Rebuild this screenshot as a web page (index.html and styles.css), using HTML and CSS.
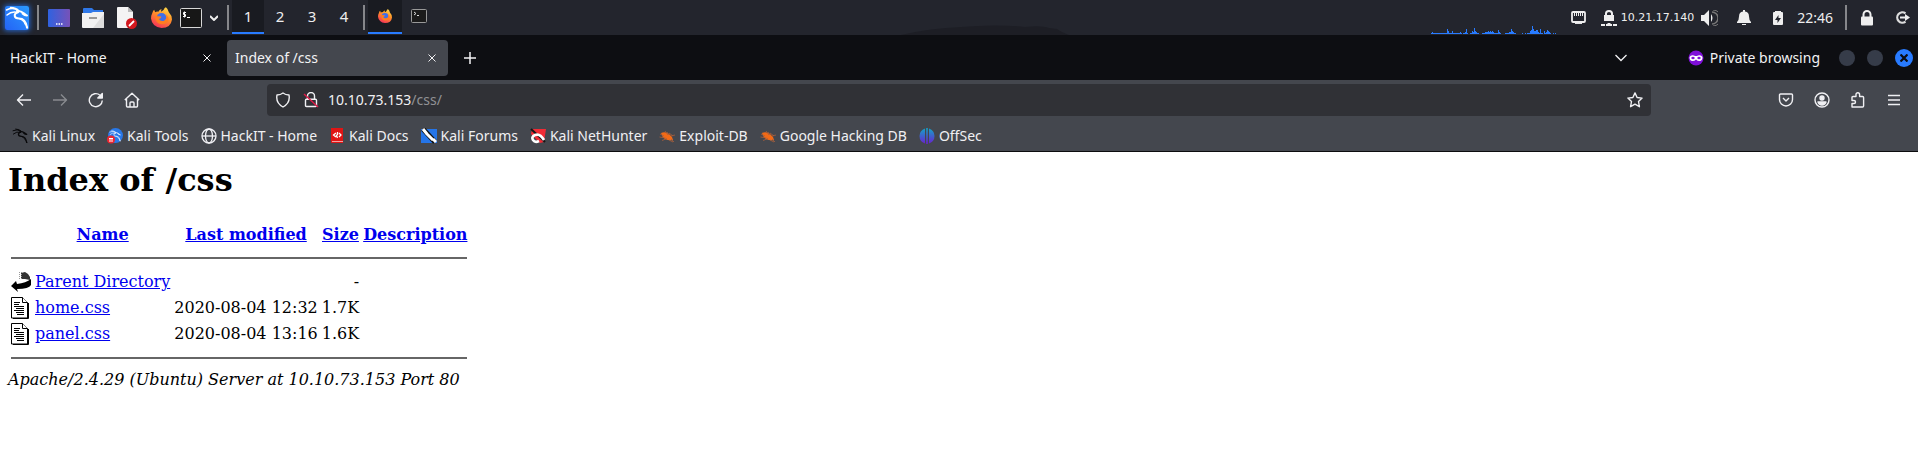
FILE: index.html
```html
<!DOCTYPE html>
<html lang="en">
<head>
<meta charset="utf-8">
<title>Index of /css</title>
<link rel="stylesheet" href="styles.css">
</head>
<body>
<svg class="defs" aria-hidden="true">
  <defs>
    <linearGradient id="kali" x1="0" y1="1" x2="1" y2="0"><stop offset="0" stop-color="#2463f5"/><stop offset="1" stop-color="#2b9bff"/></linearGradient>
    <linearGradient id="desk" x1="0" y1="0" x2="1" y2="0"><stop offset="0" stop-color="#2f62e0"/><stop offset="1" stop-color="#7752b8"/></linearGradient>
    <linearGradient id="fire" x1="0.8" y1="0" x2="0.3" y2="1"><stop offset="0" stop-color="#ffe04a"/><stop offset="0.45" stop-color="#ff9028"/><stop offset="1" stop-color="#f5305a"/></linearGradient>
    <linearGradient id="off" x1="0" y1="0" x2="0" y2="1"><stop offset="0" stop-color="#12a5c8"/><stop offset="1" stop-color="#6a1fd0"/></linearGradient>
    <symbol id="dragon" viewBox="0 0 24 24">
      <path fill="none" stroke="currentColor" stroke-width="1.500" stroke-linecap="round" d="M1.500 4Q8 1 13 4.500M2 9Q7 4.500 13 6.500M5.500 1.500Q11 1.500 14 5"/>
      <path fill="none" stroke="currentColor" stroke-width="2" stroke-linecap="round" stroke-linejoin="round" d="M12 5C17 4.500 18 7 22 9.500M17.500 7.500Q19.500 9.500 22 9.500M13 6C8 8 9 12.500 14 12.500C19 12.500 21 15 22 21.500"/>
      <path fill="none" stroke="currentColor" stroke-width="1.200" stroke-linecap="round" d="M14 12.500Q19 14.500 20 18Q21.500 19 22.500 22"/>
    </symbol>
    <symbol id="firefox" viewBox="0 0 20 20">
      <path fill="url(#fire)" d="M1 6.500Q2 3 3 2.500L4 5Q5.500 4 7 4.500Q8 2.500 10 2L9.500 4.500Q12 4 13 1Q14.500 .5 14 0Q16.500 2 17 5Q20 8 20 12Q19 20 10 20Q1 19 0 11Q0 8 1 6.500Z"/>
      <circle cx="10" cy="10.500" r="4.800" fill="#3f6fe8"/>
      <path fill="#ff7d20" d="M4 8.500L10 9Q9.500 11 7.500 11.500Q9 14 12.500 13Q16 11 14 7Q18 10 16 14Q12 18 7 15.500Q4 13 4 8.500Z"/>
    </symbol>
    <symbol id="close" viewBox="0 0 8 8"><path fill="none" stroke="currentColor" d="M.5 .5l7 7M7.500 .5l-7 7"/></symbol>
    <symbol id="bug" viewBox="0 0 16 16"><path fill="#f36a16" d="M2 5Q6 3 10 6Q13 8 14 12Q10 13 6 11Q3 9 2 5Z"/><path fill="none" stroke="#a8603c" stroke-width=".8" d="M6 3l3 4M1 6l4 2M.5 9l6 1M3 12.500l5-2M10 5l4 3M8 4l2 3M12 8l4-1M10 12l4 2M12 11l3 3"/></symbol>
    <symbol id="page" viewBox="0 0 20 22">
      <path fill="#fff" stroke="#000" d="M.5 .5h11l5 5v15.500h-16z"/><path fill="none" stroke="#000" d="M17.500 6v15.500H2"/><path fill="#fff" stroke="#000" d="M11.500 .5v5h5"/>
      <path stroke="#000" d="M3 5.500h6M3 7.500h5M3 9.500h10M5 11.500h8M3 13.500h10M5 15.500h8M6 17.500h7"/>
    </symbol>
    <symbol id="padlock" viewBox="0 0 14 16"><path fill="none" stroke="currentColor" stroke-width="2" d="M3.500 7V4.500a3.500 3.500 0 0 1 7 0V7"/><rect x="1" y="6.500" width="12" height="9" rx="1" fill="currentColor"/></symbol>
  </defs>
</svg>

<header class="panel">
  <div class="launchers">
    <button class="plain kali" aria-label="Applications"><svg width="24" height="24"><rect width="24" height="24" rx="2" fill="url(#kali)"/><use href="#dragon" width="24" height="24"/></svg></button>
    <span class="rule"></span>
    <button class="plain launcher" aria-label="Show desktop"><svg width="22" height="18"><rect width="22" height="18" rx="1" fill="url(#desk)"/><path stroke="#fff" stroke-width="1.500" stroke-dasharray="1.500 1" d="M8 15h7"/></svg></button>
    <button class="plain launcher" aria-label="Files"><svg width="22" height="20"><path fill="#2f78e8" d="M1 1q0-1 1-1h8l2 2h9v5H1z"/><path fill="#f1f1f1" d="M0 5h9l2-1h11v15q0 1-1 1H1q-1 0-1-1z"/><path fill="#ddd" d="M22 6v13q0 1-1 1H11z"/><path stroke="#999" stroke-width="2" d="M7 10h8"/></svg></button>
    <button class="plain launcher" aria-label="Text editor"><svg width="20" height="22"><path fill="#f4f4f4" d="M0 1q0-1 1-1h10l5 5v16H1q-1 0-1-1z"/><path fill="#bbb" d="M11 0l5 5h-5z"/><circle cx="14.500" cy="16.500" r="5.500" fill="#d2181e"/><path stroke="#fff" stroke-width="1.800" d="M12 19l5-5"/></svg></button>
    <button class="plain launcher" aria-label="Firefox"><svg width="21" height="21"><use href="#firefox" width="21" height="21"/></svg></button>
    <button class="plain launcher terminal" aria-label="Terminal"><svg width="22" height="20"><rect x=".5" y=".5" width="21" height="19" rx="1" fill="#171717" stroke="#d8d8d8"/><path fill="none" stroke="#fff" d="M6 4.500H3.500v2h2v2H3M4.500 3.500v6M7 9.500h3"/></svg></button>
    <button class="plain more" aria-label="More launchers"><svg width="8" height="6"><path fill="none" stroke="#eee" stroke-width="2" d="M0 1l4 4 4-4"/></svg></button>
    <span class="rule"></span>
    <nav class="workspaces" aria-label="Workspaces">
      <button class="workspace active">1</button><button class="workspace">2</button><button class="workspace">3</button><button class="workspace">4</button>
    </nav>
    <span class="rule"></span>
    <button class="window active" aria-label="Firefox window"><svg width="14" height="14"><use href="#firefox" width="14" height="14"/></svg></button>
    <button class="window" aria-label="Terminal window"><svg width="16" height="14"><rect x=".5" y=".5" width="15" height="13" rx="1" fill="#1b1b1b" stroke="#999"/><path fill="none" stroke="#ddd" d="M3 3l2 1.500L3 6M6 6.500h2"/></svg></button>
  </div>
  <svg class="hill" width="168" height="10" aria-hidden="true"><path fill="#1d1e25" d="M0 10Q30 3 60 2Q95-1 124 2Q140 0 148 3L156 4Q160 7 168 10Z"/></svg>
  <div class="tray">
    <svg class="graph" width="126" height="8" aria-hidden="true"><path fill="none" stroke="#287bff" d="M0 7.500h31M32 7.500h5M39 7.500h9M51 7.500h19M74 7.500h11M91 7.500h1M94 7.500h1M96 7.500h13M110 7.500h2M113 7.500h7M122 7.500h1M124 7.500h1M1.500 6v2M16.500 3v5M17.500 5v3M21.500 5v3M29.500 6v2M34.500 6v2M35.500 3v5M41.500 5v3M42.500 6v2M43.500 2v6M44.500 5v3M45.500 6v2M54 6.500h9M57.500 5v3M59.500 5v3M61.500 5v3M67.500 4v4M68.500 6v2M78 6.500h5M80.500 3v5M81.500 5v3M99.500 5v3M100.500 4v4M101.500 0v8M102.500 3v5M103.500 5v3M104.500 5v3M105.500 4v4M106.500 4v4M107.500 6v2M109.500 3v5M113.500 5v3M115.500 6v2M116.500 4v4M117.500 5v3M118.500 6v2"/></svg>
    <svg class="ethernet" width="15" height="13"><rect x="1" y="1" width="13" height="10" rx="1" fill="none" stroke="#eee" stroke-width="1.800"/><path stroke="#eee" d="M3.500 2v3M5.500 2v3M7.500 2v3M9.500 2v3M11.500 2v3"/><path stroke="#eee" stroke-width="1.500" d="M4 12.200h7"/></svg>
    <span class="vpn"><svg width="16" height="16"><path fill="none" stroke="#eee" stroke-width="2" d="M5 6V3.500a3 2.500 0 0 1 6 0V6"/><path fill="#eee" d="M3 5h10v6H3zM0 14h4v2H0zM5 14h1l1-1h2l1 1h1v2H5zM12 14h4v2h-4z"/></svg>10.21.17.140</span>
    <svg class="speaker" width="17" height="16"><path fill="#eee" d="M0 5h3l5-5v16l-5-5H0zM10 4q3 4 0 8z"/><path fill="none" stroke="#777" stroke-width="1.500" d="M11 2a6 6 0 0 1 0 12"/><path fill="none" stroke="#777" d="M12 0a8 8 0 0 1 0 16"/></svg>
    <svg class="bell" width="14" height="15"><path fill="#eee" d="M6 0h2v1.500q4 .5 4 5Q12 10 14 12v1H0v-1q2-2 2-5.500Q2 2 6 1.500zM5 14h4v1H5z"/></svg>
    <svg class="battery" width="10" height="14"><path fill="#eee" d="M2 0h6v1h1q1 0 1 1v11q0 1-1 1H1q-1 0-1-1V2q0-1 1-1h1z"/><path fill="#22242c" d="M5.500 4v3H8l-3.500 5V9H2z"/></svg>
    <time class="clock">22:46</time>
    <span class="rule"></span>
    <button class="plain lock" aria-label="Lock screen"><svg width="14" height="16" color="#eee"><use href="#padlock" width="14" height="16"/></svg></button>
    <button class="plain logout" aria-label="Log out"><svg width="15" height="13"><path fill="none" stroke="#ddd" stroke-width="2.200" d="M10.500 2.300a5.200 5.200 0 1 0 0 8.400"/><path fill="#eee" d="M5 5.500h5V3l5 3.500-5 3.500V7.500H5z"/></svg></button>
  </div>
</header>

<div class="tabbar">
  <div class="tab"><span>HackIT - Home</span><button class="plain" aria-label="Close tab"><svg width="8" height="8"><use href="#close"/></svg></button></div>
  <div class="tab current"><span>Index of /css</span><button class="plain" aria-label="Close tab"><svg width="8" height="8"><use href="#close"/></svg></button></div>
  <button class="plain newtab" aria-label="New tab"><svg width="12" height="12"><path stroke="currentColor" stroke-width="1.500" d="M6 0v12M0 6h12"/></svg></button>
  <button class="plain alltabs" aria-label="List all tabs"><svg width="12" height="8"><path fill="none" stroke="currentColor" stroke-width="1.300" d="M.5 1L6 6.500 11.500 1"/></svg></button>
  <div class="private"><svg width="16" height="16"><circle cx="8" cy="8" r="7.500" fill="#7f0fd8"/><path fill="#fff" d="M1.500 7Q3 4.500 6 5.500Q8 6.500 10 5.500Q13 4.500 14.500 7Q14.500 11 11.500 11Q9.500 11 8 9.500Q6.500 11 4.500 11Q1.500 11 1.500 7z"/><ellipse cx="5" cy="8" rx="1.700" ry="1.200" fill="#7f0fd8"/><ellipse cx="11" cy="8" rx="1.700" ry="1.200" fill="#7f0fd8"/></svg>Private browsing</div>
  <div class="controls">
    <button class="control" aria-label="Minimize"></button><button class="control" aria-label="Maximize"></button>
    <button class="control quit" aria-label="Close"><svg width="8" height="8"><path stroke="#0c0d11" stroke-width="2.200" d="M.5 .5l7 7M7.500 .5l-7 7"/></svg></button>
  </div>
</div>

<div class="toolbar">
  <div class="moves">
    <button class="plain" aria-label="Back"><svg width="16" height="16"><path d="M15 8H1.500M7 2.500L1.500 8 7 13.500"/></svg></button>
    <button class="plain dim" aria-label="Forward"><svg width="16" height="16"><path d="M1 8h13.500M9 2.500L14.500 8 9 13.500"/></svg></button>
    <button class="plain" aria-label="Reload"><svg width="16" height="16"><path d="M14.300 8.500A6.500 6.500 0 1 1 12 3.200"/><path class="solid" d="M14.300 1.500v4.500H9.800z"/></svg></button>
    <button class="plain" aria-label="Home"><svg width="16" height="16"><path d="M.8 8L8 1.200 15.200 8M2.500 7v7q0 1 1 1h9q1 0 1-1V7M6 15v-4q0-1 1-1h2q1 0 1 1v4"/></svg></button>
  </div>
  <div class="address">
    <svg width="16" height="16"><path d="M8 1Q10.500 3 14 3Q15.500 11 8 15Q.5 11 2 3Q5.500 3 8 1Z"/></svg>
    <svg width="16" height="16"><path d="M4.500 7V4a3.500 3.500 0 0 1 7 0v3M3.500 7.200h9q1 0 1 1v5.300q0 1-1 1h-9q-1 0-1-1V8.200q0-1 1-1z"/><path class="slash" d="M1 2l14 13"/></svg>
    <div class="url"><input class="field" aria-label="Address" value="10.10.73.153/css/"><span class="shown" aria-hidden="true">10.10.73.153<span class="path">/css/</span></span></div>
    <svg width="16" height="16"><path d="M8 .9l2.100 4.600 5 .6-3.600 3.400.9 5.200L8 12.200l-4.400 2.500.9-5.200L.9 6.100l5-.6z"/></svg>
  </div>
  <div class="tools">
    <button class="plain" aria-label="Pocket"><svg width="16" height="16"><path d="M2.500 2h11q1 0 1 1v4.500a6.500 6.500 0 0 1-13 0V3q0-1 1-1zM5 6l3 3 3-3"/></svg></button>
    <button class="plain" aria-label="Account"><svg width="16" height="16"><circle cx="8" cy="8" r="7"/><circle class="solid" cx="8" cy="6" r="2"/><path class="solid" d="M4 10h8q-1 3-4 3t-4-3z"/></svg></button>
    <button class="plain" aria-label="Extensions"><svg width="16" height="16"><path d="M2 5.500q0-1 1-1h3V2.500a1.800 1.800 0 0 1 3.600 0v2h3q1 0 1 1V14q0 1-1 1H2v-3.500h2a1.500 1.500 0 0 0 0-3H2z"/></svg></button>
    <button class="plain" aria-label="Menu"><svg width="16" height="16"><path d="M2 3.500h12M2 8h12M2 12.500h12"/></svg></button>
  </div>
</div>

<nav class="bookmarks" aria-label="Bookmarks">
  <a href="#"><svg width="16" height="16" color="#08080a"><use href="#dragon" width="16" height="16"/></svg>Kali Linux</a>
  <a href="#"><svg width="16" height="16" color="#dce8ff"><circle cx="8.500" cy="7.500" r="7.500" fill="#2878e8"/><use href="#dragon" x="2" y="2" width="12" height="12"/><circle cx="4" cy="11.500" r="4" fill="#ed2530"/><path fill="none" stroke="#fff" d="M2 10.500h4M3 10v4M5 10v4"/></svg>Kali Tools</a>
  <a href="#"><svg width="16" height="16"><g fill="none" stroke="#f0f0f4" stroke-width="1.300"><circle cx="8" cy="8" r="7"/><ellipse cx="8" cy="8" rx="3.500" ry="7"/><path d="M1 8h14"/></g></svg>HackIT - Home</a>
  <a href="#"><svg width="16" height="16"><path fill="#e01515" d="M2 0h12v15H3q-1 0-1-1z"/><path fill="#f3a0a0" d="M3 13h11v1H3z"/><path fill="none" stroke="#fff" stroke-width="1.300" d="M7 5L4.500 7 7 9M8.500 4v2.500L7.500 7.500 8.500 10M10 5l2 2-2 2"/></svg>Kali Docs</a>
  <a href="#"><svg width="16" height="16"><path fill="#2575e8" d="M0 1h16v14H0z"/><path stroke="#111" stroke-width="5" d="M2 1l12 13"/><path stroke="#fff" stroke-width="3" d="M2 1l4 5M5 5l7 7M12 11l3 3"/></svg>Kali Forums</a>
  <a href="#"><svg width="16" height="16"><path fill="#f02b35" d="M2 1h14l-2 13-4 1L1 6z"/><path stroke="#151515" stroke-width="2" d="M1 1l14 13"/><path fill="none" stroke="#fff" stroke-width="2.600" d="M14 12Q10 5 5 7Q1 9 3 12Q5 15 9 13"/></svg>Kali NetHunter</a>
  <a href="#"><svg width="16" height="16"><use href="#bug"/></svg>Exploit-DB</a>
  <a href="#"><svg width="16" height="16"><use href="#bug"/></svg>Google Hacking DB</a>
  <a href="#"><svg width="16" height="16"><path fill="url(#off)" d="M6 .5v15Q.5 13.500 .5 8T6 .5zM7.200 0h1.600v16H7.200zM10 .5q5.500 2 5.500 7.500T10 15.500z"/></svg>OffSec</a>
</nav>

<main class="page">
  <h1>Index of /css</h1>
  <table class="listing">
    <tr><th></th><th><a href="#">Name</a></th><th><a href="#">Last modified</a></th><th><a href="#">Size</a></th><th><a href="#">Description</a></th></tr>
    <tr><td colspan="5"><hr></td></tr>
    <tr><td><svg width="20" height="22"><path fill="#333" d="M10 2l4-1 3 2 2 3v3l-5-1-4 0z"/><path stroke="#999" stroke-dasharray="1 1" d="M8.500 1v7M10.500 1v7"/><path fill="#000" d="M0 15l5-5 1 3q9-1 14-5v6q-2 4-14 4l1 3z"/></svg></td><td><a href="#">Parent Directory</a></td><td></td><td class="size">-</td><td></td></tr>
    <tr><td><svg width="20" height="22"><use href="#page"/></svg></td><td><a href="#">home.css</a></td><td>2020-08-04 12:32</td><td class="size">1.7K</td><td></td></tr>
    <tr><td><svg width="20" height="22"><use href="#page"/></svg></td><td><a href="#">panel.css</a></td><td>2020-08-04 13:16</td><td class="size">1.6K</td><td></td></tr>
    <tr><td colspan="5"><hr></td></tr>
  </table>
  <address>Apache/2.4.29 (Ubuntu) Server at 10.10.73.153 Port 80</address>
</main>
</body>
</html>
```
FILE: styles.css
```css
* { box-sizing: border-box; }
body { margin: 0; background: #fff; color: #000; font: 15px/20px "Noto Sans", sans-serif; }
svg { display: block; flex: none; }
.defs { position: absolute; width: 0; height: 0; }
button { font: inherit; color: inherit; }
.plain { display: flex; padding: 0; border: 0; background: none; }

.panel { position: relative; display: flex; justify-content: space-between; height: 35px; background: #23252d; color: #eee; }
.launchers, .tray { display: flex; align-items: center; }
.launchers { padding-left: 5px; }
.kali { margin-right: 8px; border-radius: 2px; color: #fff; box-shadow: 0 0 5px 1px #2463c8; }
.rule { width: 2px; height: 25px; background: #86878b; }
.launcher { width: 22px; margin-left: 9px; margin-right: 3px; justify-content: center; }
.launchers .terminal { margin-left: 5px; }
.more { margin: 0 9px 0 5px; }
.workspaces { display: flex; align-self: stretch; margin: 0 3px; }
.workspace, .window { align-self: stretch; width: 32px; height: 34px; padding: 0; border: 0; border-bottom: 2px solid transparent; background: none; }
.window { display: flex; width: 34px; align-items: center; justify-content: center; }
.rule + .window { margin-left: 3px; }
.workspace.active, .window.active { background: #191b21; border-color: #287bff; }
.hill { position: absolute; left: 47%; bottom: 0; }
.tray { padding-right: 8px; }
.graph { align-self: flex-end; margin: 0 14px 1px 0; }
.vpn { display: flex; align-items: center; gap: 4px; margin-left: 15px; font: 11px/16px "DejaVu Sans", sans-serif; }
.speaker { margin-left: 7px; }
.bell { margin-left: 19px; }
.battery { margin-left: 22px; }
.clock { margin: 0 12px 0 14px; font-size: 14px; }
.lock { margin-left: 13px; }
.logout { margin-left: 21px; }

.tabbar { display: flex; align-items: center; height: 45px; background: #0d0e12; color: #f2f2f4; font-size: 14px; }
.tab { display: flex; align-items: center; justify-content: space-between; width: 221px; height: 36px; padding: 0 10px; border-radius: 4px; }
.tab.current { margin-left: 6px; padding: 0 12px 0 8px; background: #44474e; }
.newtab { margin-left: 16px; }
.alltabs { margin-left: auto; }
.private { display: flex; align-items: center; gap: 6px; margin-left: 61px; }
.controls { display: flex; align-items: center; gap: 12px; margin: 0 5px 0 19px; }
.control { display: flex; align-items: center; justify-content: center; width: 16px; height: 16px; padding: 0; border: 0; border-radius: 50%; background: #363c49; }
.control.quit { width: 18px; height: 18px; background: #287bff; }

.toolbar { display: flex; align-items: center; height: 40px; padding: 0 16px; background: #44474e; color: #f0f0f3; font-size: 14px; }
.toolbar path, .toolbar circle { fill: none; stroke: currentColor; stroke-width: 1.4; stroke-linejoin: round; }
.toolbar .solid { fill: currentColor; }
.toolbar .slash { stroke: #e01a48; }
.moves, .tools { display: flex; gap: 20px; }
.dim { color: #898b90; }
.address { display: flex; flex: 1; align-items: center; height: 32px; margin: 0 127px; padding: 0 8px; border-radius: 4px; background: #303136; }
.address svg + svg { margin-left: 12px; }
.url { position: relative; flex: 1; margin: 0 9px; }
.field { display: block; width: 100%; height: 24px; padding: 0; border: 0; background: none; color: transparent; font: inherit; }
.shown { position: absolute; inset: 2px 0; pointer-events: none; }
.path { color: #909195; }

.bookmarks { display: flex; align-items: center; gap: 12px; height: 32px; padding: 0 12px; background: #44474e; border-bottom: 1px solid #0c0c0e; font-size: 14px; }
.bookmarks a { display: flex; align-items: center; gap: 4px; color: #f0f0f3; text-decoration: none; }

.page { padding: 9px 8px; font: 16px/19px "DejaVu Serif", serif; }
.page h1 { margin: 0 0 21px; font-size: 32px; line-height: 38px; }
.listing { border-spacing: 2px; }
.listing tr { height: 24px; }
.listing td, .listing th { padding: 1px; vertical-align: top; }
.listing td { line-height: 22px; }
.listing th { padding-top: 3px; }
.listing tr:has(hr) { height: 20px; }
.listing a { color: #00e; }
.listing hr { height: 2px; margin: 8px 0; border: 0; background: #666; }
.size { text-align: right; }
```
